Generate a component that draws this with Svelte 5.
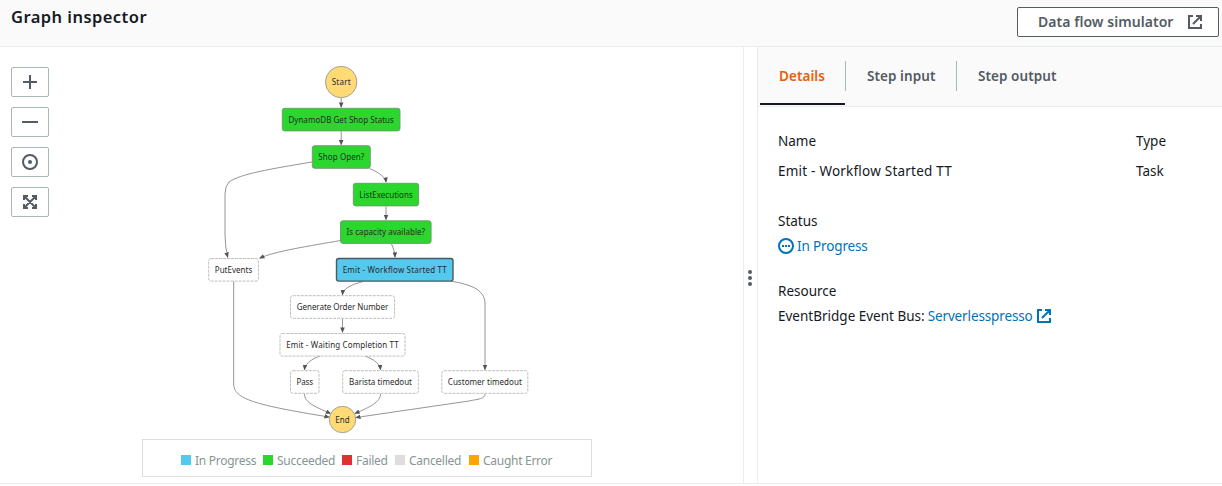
<script>
  const nodes = [
    { t: 'DynamoDB Get Shop Status', x: 282.3, y: 108.3, w: 117.7, k: 'ok', tw: 105.5 },
    { t: 'Shop Open?', x: 312.3, y: 145.7, w: 58, k: 'ok', tw: 46 },
    { t: 'ListExecutions', x: 353.3, y: 183.3, w: 65.4, k: 'ok', tw: 53.5 },
    { t: 'Is capacity available?', x: 340.5, y: 220.8, w: 90.6, k: 'ok', tw: 78.5 },
    { t: 'PutEvents', x: 208.7, y: 258.5, w: 49.7, k: 'idle', tw: 37.5 },
    { t: 'Emit - Workflow Started TT', x: 336.5, y: 258.5, w: 116.5, k: 'run', tw: 104 },
    { t: 'Generate Order Number', x: 290.5, y: 295.7, w: 104, k: 'idle', tw: 91.5 },
    { t: 'Emit - Waiting Completion TT', x: 280, y: 333.5, w: 125, k: 'idle', tw: 112.5 },
    { t: 'Pass', x: 290.5, y: 370.7, w: 28.5, k: 'idle', tw: 16.5 },
    { t: 'Barista timedout', x: 342.7, y: 370.7, w: 75.6, k: 'idle', tw: 63 },
    { t: 'Customer timedout', x: 441.8, y: 370.7, w: 86, k: 'idle', tw: 74 }
  ];
  const edges = [
    'M341.2 98V107',
    'M341.2 131.5V144.5',
    'M312 162C270 169 240 174 229 182Q225 186 225 194V235Q225.3 248 227.7 257',
    'M369.5 168.5C378 172 385.5 177 386 182',
    'M386 206.5V219.5',
    'M340.5 240.5C310 246 275 251 259.8 258.2',
    'M391.5 244C393.5 248 394.8 253 395 257',
    'M363 281.5C350 285 343 289 342.5 294.5',
    'M450.5 281C470 284.5 485 289 485 304V369.5',
    'M342.5 319V332',
    'M320 356C309 360 305 365 304.5 369.5',
    'M365 356C376 360 380 365 380.5 369.5',
    'M233.7 281.5V384C233.7 399 255 405 329 417',
    'M304.5 394C304.5 402 313 406 330.5 413.5',
    'M380.5 394C380.5 402 370 407 355 413.5',
    'M485 394C485 399 478 399 469 401L356 417.5'
  ];
  const legend = [
    { t: 'In Progress', c: '#53c9ed', w: 60 },
    { t: 'Succeeded', c: '#2bd62e', w: 57 },
    { t: 'Failed', c: '#df3131', w: 31 },
    { t: 'Cancelled', c: '#dddddd', w: 52 },
    { t: 'Caught Error', c: '#ffa500', w: 69 }
  ];
</script>

{#snippet external()}
  <svg class="ext" width="14" height="14" viewBox="0 0 14 14" fill="none" stroke="currentColor" stroke-width="2">
    <path d="M5 1H1V13H13V9M8 1H13V6M13 1L5 9" />
  </svg>
{/snippet}

<div class="page">
  <header>
    <h1>Graph inspector</h1>
    <button class="sim"><span>Data flow simulator</span>{@render external()}</button>
  </header>
  <main>
    <section class="graph">
      <div class="tools">
        <button aria-label="Zoom in"><svg width="16" height="16" viewBox="0 0 16 16"><path d="M1 8H15M8 1V15" /></svg></button>
        <button aria-label="Zoom out"><svg width="16" height="16" viewBox="0 0 16 16"><path d="M0 8H16" /></svg></button>
        <button aria-label="Center"><svg width="16" height="16" viewBox="0 0 16 16"><circle cx="8" cy="8" r="7" /><circle class="dot" cx="8" cy="8" r="2" /></svg></button>
        <button aria-label="Fit"><svg width="16" height="16" viewBox="0 0 16 16"><path d="M2 6V2H6M10 2H14V6M14 10V14H10M6 14H2V10M2 2L14 14M14 2L2 14" /></svg></button>
      </div>
      <svg class="canvas" width="743" height="392" viewBox="0 47 743 392">
        <defs>
          <marker id="arrow" viewBox="0 0 6 5" refX="5" refY="2.5" markerWidth="5.5" markerHeight="4.6" markerUnits="userSpaceOnUse" orient="auto">
            <path d="M0 0L6 2.5L0 5Z" fill="#545454" />
          </marker>
        </defs>
        {#each edges as d}
          <path class="edge" {d} marker-end="url(#arrow)" />
        {/each}
        <circle class="end" cx="341.2" cy="82" r="15.7" />
        <circle class="end" cx="342.5" cy="419.5" r="13.2" />
        <text x="341.2" y="85" textLength="19">Start</text>
        <text x="342.5" y="423" textLength="14.5">End</text>
        {#each nodes as n}
          <rect class={n.k} x={n.x} y={n.y} width={n.w} height="22.6" rx="2.3" />
          <text x={n.x + n.w / 2} y={Math.round(n.y + 14.6)} textLength={n.tw} >{n.t}</text>
        {/each}
      </svg>
      <div class="legend">
        {#each legend as l}
          <span class="item"><i style:background={l.c}></i><span style:width="{l.w}px">{l.t}</span></span>
        {/each}
      </div>
    </section>
    <div class="grip"><svg width="4" height="16" viewBox="0 0 4 16"><circle cx="2" cy="2" r="2" /><circle cx="2" cy="8" r="2" /><circle cx="2" cy="14" r="2" /></svg></div>
    <aside>
      <nav>
        <span class="tab active">Details</span>
        <span class="tab second">Step input</span>
        <span class="tab third">Step output</span>
      </nav>
      <div class="details">
        <div class="pair">
          <div>Name</div><div>Type</div>
          <div class="wf">Emit - Workflow Started TT</div><div>Task</div>
        </div>
        <div class="group">
          <div>Status</div>
          <div class="blue status">
            <svg width="16" height="16" viewBox="0 0 16 16"><circle cx="8" cy="8" r="7" fill="none" stroke="currentColor" stroke-width="2" /><path d="M4 7h2v2H4zM7 7h2v2H7zM10 7h2v2h-2z" fill="currentColor" /></svg>
            <span>In Progress</span>
          </div>
        </div>
        <div class="group">
          <div>Resource</div>
          <div class="res"><span>EventBridge Event Bus:</span><span class="blue link">Serverlesspresso</span><span class="blue icon">{@render external()}</span></div>
        </div>
      </div>
    </aside>
  </main>
</div>

<style>
  :global(body) { margin: 0; background: #fff; }
  .page { width: 1222px; height: 486px; overflow: hidden; font-family: "Noto Sans", sans-serif; font-size: 13.5px; color: #16191f; white-space: nowrap; }
  .page, .page * { box-sizing: border-box; }
  header { height: 47px; background: #fafafa; border-bottom: 1px solid #eaeded; display: flex; justify-content: space-between; padding: 7px 3px 0 11px; }
  h1 { margin: 0; height: 20px; font-size: 16.5px; line-height: 19px; font-weight: 600; letter-spacing: 0.45px; }
  button { font: inherit; background: #fff; border: 1px solid #aab7b8; border-radius: 2px; padding: 0; display: flex; align-items: center; color: #545b64; }
  .sim { width: 202px; height: 30px; border-color: #545b64; padding-left: 20px; font-size: 14px; font-weight: 600; letter-spacing: 0.05px; }
  .sim span { width: 150px; text-align: left; line-height: 20px; padding-bottom: 1px; }
  .ext { display: block; flex: none; }
  main { display: flex; height: 437px; border-bottom: 1px solid #eaeded; }
  .graph { width: 744px; border-right: 1px solid #eaeded; display: grid; grid-template-rows: 392px 44px; }
  .tools { grid-area: 1 / 1; padding: 20px 0 0 11px; display: flex; flex-direction: column; gap: 10px; z-index: 1; width: 60px; }
  .tools button { width: 38px; height: 30px; justify-content: center; }
  .tools svg { fill: none; stroke: #545b64; stroke-width: 2; }
  .tools .dot { fill: #545b64; stroke: none; }
  .canvas { grid-area: 1 / 1; display: block; }
  .canvas text { font-size: 8px; text-anchor: middle; fill: #2a2a2a; }
  .canvas .edge { fill: none; stroke: #888; stroke-width: 0.9; }
  .end { fill: #ffda75; stroke: #999; stroke-width: 0.9; }
  .ok { fill: #2bd62e; stroke: #6f966f; stroke-width: 0.9; }
  .run { fill: #53c9ed; stroke: #4d5960; stroke-width: 1.4; }
  .idle { fill: #fff; stroke: #b8b8b8; stroke-width: 0.9; stroke-dasharray: 3 1; }
  .legend { grid-area: 2 / 1; width: 450px; height: 38px; margin-left: 142px; border: 1px solid #ddd; display: flex; padding: 5px 0 0 38px; align-items: center; gap: 8px; font-size: 12px; letter-spacing: -0.28px; color: #879596; }
  .item { display: flex; align-items: center; gap: 4px; }
  .item i { width: 10px; height: 10px; margin-bottom: 2px; }
  .grip { width: 13px; display: flex; align-items: center; padding: 25px 0 0 4px; fill: #545b64; }
  aside { flex: 1; border-left: 1px solid #eaeded; }
  nav { height: 60px; background: #fafafa; border-bottom: 1px solid #eaeded; padding-left: 2px; display: flex; font-size: 13.5px; font-weight: 600; color: #545b64; }
  .tab { height: 30px; margin-top: 14px; line-height: 30px; letter-spacing: 0.07px; }
  .active { width: 85px; height: 58px; margin-top: 0; padding: 14px 0 0 19px; color: #eb5f07; border-bottom: 2px solid #16191f; }
  .second { width: 111px; border-left: 1px solid #aab7b8; padding-left: 21px; }
  .third { border-left: 1px solid #aab7b8; padding-left: 21px; }
  .details { padding: 24px 0 0 20px; line-height: 20px; }
  .pair { display: grid; grid-template-columns: 358px 1fr; row-gap: 10px; }
  .wf { letter-spacing: 0.22px; }
  .group { display: grid; row-gap: 5px; margin-top: 30px; }
  .group + .group { margin-top: 25px; }
  .blue { color: #0073bb; }
  .status { display: flex; align-items: center; gap: 3px; letter-spacing: -0.14px; }
  .res { display: flex; align-items: center; }
  .link { margin-left: 3px; letter-spacing: -0.13px; }
  .icon { margin-left: 4px; }
</style>
